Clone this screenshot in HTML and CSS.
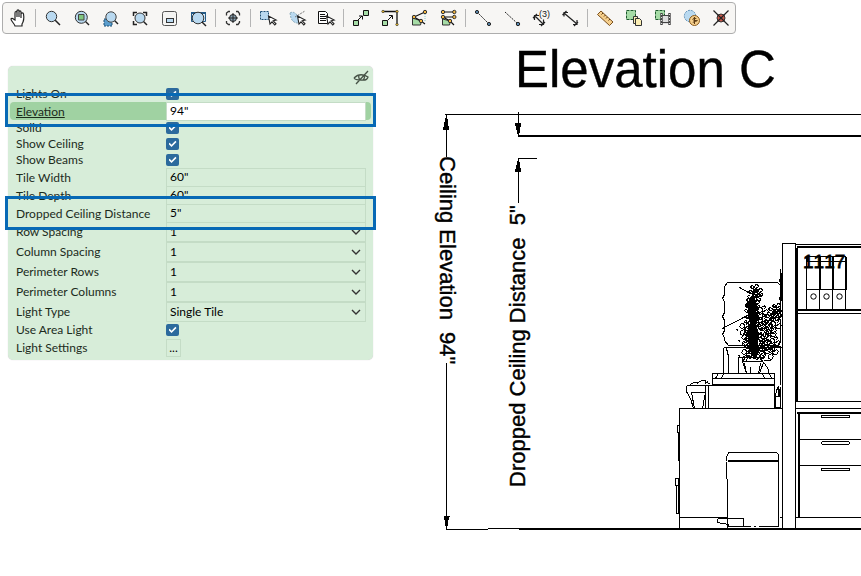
FILE: index.html
```html
<!DOCTYPE html>
<html lang="en">
<head>
<meta charset="utf-8">
<title>Elevation C</title>
<link rel="stylesheet" href="styles.css">
</head>
<body>
<svg class="defs" aria-hidden="true">
  <defs>
    <path id="cursor" d="M11.5 8l1.500 8 2-2.200 2.800 3.200 1.200-1.200-2.800-3 3-.8z" fill="#fff" stroke="#222" stroke-width="1.100"/>
    <path id="chevron" d="M1 2l4 4 4-4" fill="none" stroke="#333" stroke-width="1.400"/>
    <g id="leaf" fill="none" stroke="#000">
      <path d="M0 0h-2l-1-2 2-1 2 2 1-3h2l1 2-3 2 3 1v2l-2 1-2-3-1 3-2 1-2-2 3-2"/>
    </g>
    <g id="bush">
      <use href="#leaf" x="-3" y="-2"/><use href="#leaf" x="2" y="1"/><use href="#leaf" x="-1" y="4"/>
    </g>
    <path id="spray" d="M-4-1l2-3 3 1v3l-3 1zM1 1l4-3 2 2-2 3h-3zM-3 4l3-2 2 3-2 3-3-1zM0-4l3-2 1 2-2 2M-5 3l-2-1" fill="none" stroke="#000"/>
  </defs>
</svg>
<header class="toolbar" role="toolbar" aria-label="View tools">
  <button class="tool" aria-label="Pan"><svg viewBox="0 0 21 20"><path d="M8 18C7 15 4 13 4 11c0-1 2-1 3 .5L8 12V5c0-2 2-2 2 0v4-6c0-1.500 2-1.500 2 0v6-5c0-1.500 2-1.500 2 0v6-4c0-1.500 2.500-1.500 2.500 0 .7 4 .5 7-1.500 10v2z" fill="#fff" stroke="#222" stroke-width="1.200"/></svg></button>
  <span class="sep"></span>
  <button class="tool" aria-label="Zoom"><svg viewBox="0 0 21 20"><path d="M13 12l5 5" stroke="#222" stroke-width="1.500"/><circle cx="9.500" cy="8.500" r="5.200" fill="#b9d9f0" stroke="#333"/></svg></button>
  <button class="tool" aria-label="Zoom object"><svg viewBox="0 0 21 20"><path d="M14 13l4 4" stroke="#222" stroke-width="1.500"/><circle cx="10.300" cy="9.300" r="6" fill="#b9d9f0" stroke="#333"/><path d="M7.500 6.500h5.500v5.500H7.500z" fill="#7fc77f" stroke="#444"/></svg></button>
  <button class="tool" aria-label="Zoom selection"><svg viewBox="0 0 21 20"><path d="M4 11h8v7H4z" fill="#5b9dcc" stroke="#1d4e75" stroke-dasharray="2 1"/><path d="M14 12l4 4" stroke="#222" stroke-width="1.500"/><circle cx="11" cy="9" r="5.200" fill="#b9d9f0" stroke="#444"/></svg></button>
  <button class="tool" aria-label="Zoom extents"><svg viewBox="0 0 21 20"><path d="M4.500 8V4.500H8M14 4.500h3.500V8M4.500 13v3.500H8M14 13l4 4" fill="none" stroke="#222" stroke-width="1.500"/><circle cx="11" cy="10" r="5" fill="#b9d9f0" stroke="#333"/></svg></button>
  <button class="tool" aria-label="Overview"><svg viewBox="0 0 21 20"><rect x="4.500" y="3.500" width="14" height="14" rx="2" fill="#f4f4f2" stroke="#555"/><rect x="8.500" y="10.500" width="7" height="4" fill="#b9d9f0" stroke="#333"/></svg></button>
  <button class="tool" aria-label="Zoom window"><svg viewBox="0 0 21 20"><path d="M4.500 4.500h14v9h-14z" fill="#d9ecf8" stroke="#245a86"/><path d="M4 4h15v2H4z" fill="#245a86"/><path d="M15 14l4 4" stroke="#222" stroke-width="1.500"/><circle cx="11" cy="10" r="5.800" fill="#b9d9f0" stroke="#333"/></svg></button>
  <span class="sep"></span>
  <button class="tool" aria-label="Center view"><svg viewBox="0 0 21 20"><path d="M4.500 7.500V5l2-1.500H8M14 3.500h2l1.500 2v2M4.500 13v2l2 1.500H8M14 16.500h2l1.500-2V13" fill="none" stroke="#333" stroke-width="1.300"/><circle cx="11" cy="10" r="3.500" fill="#8aa3b5" stroke="#222"/><path d="M11 5v10M6 10h10" stroke="#222"/></svg></button>
  <span class="sep"></span>
  <button class="tool" aria-label="Select"><svg viewBox="0 0 21 20"><path d="M3.500 3.500h8v8h-8z" fill="#b9d9f0" stroke="#1d4e75" stroke-dasharray="2 1"/><use href="#cursor"/></svg></button>
  <button class="tool" aria-label="Lasso select"><svg viewBox="0 0 21 20"><path d="M4 5q3-2 6 1l4 3-2 6q-5 0-7-5z" fill="#b9d9f0" stroke="#8ab" stroke-dasharray="2 1"/><path d="M9 9l10-6" stroke="#777" stroke-dasharray="2 1"/><use href="#cursor"/></svg></button>
  <button class="tool" aria-label="Select from list"><svg viewBox="0 0 21 20"><path d="M3.500 3.500h7l2 2v10h-9z" fill="#fff" stroke="#111"/><path d="M5 6.500h5M5 8.500h6M5 10.500h6M5 12.500h6" stroke="#111"/><use href="#cursor"/></svg></button>
  <span class="sep"></span>
  <button class="tool" aria-label="Move"><svg viewBox="0 0 21 20"><path d="M3.500 12.500h5v5h-5zM13.500 2.500h5v5h-5z" fill="#a6dca6" stroke="#111"/><path d="M8 12l4-4M9 8h3.500v3.500" fill="none" stroke="#111"/></svg></button>
  <button class="tool" aria-label="Move to corner"><svg viewBox="0 0 21 20"><path d="M4 3.500h14v13" fill="none" stroke="#111" stroke-width="1.300"/><path d="M3.500 12.500h5v5h-5z" fill="#a6dca6" stroke="#111"/><path d="M9 12l4-4M10 7.500h3.500V11" fill="none" stroke="#111"/><g fill="#f4c430" stroke="#333" stroke-width=".7"><circle cx="4" cy="3.500" r="1.200"/><circle cx="18" cy="3.500" r="1.200"/><circle cx="18" cy="16.500" r="1.200"/></g></svg></button>
  <button class="tool" aria-label="Edit shape"><svg viewBox="0 0 21 20"><path d="M4.500 10v7h8l1-4z" fill="#a6dca6" stroke="#333"/><path d="M17 4v9" stroke="#8cc" stroke-dasharray="1 1"/><path d="M17 4L6 9l7 4 4 3" fill="none" stroke="#111" stroke-width="1.200"/><g fill="#f4b740" stroke="#333"><circle cx="17" cy="4" r="1.700"/><circle cx="6" cy="9" r="1.700"/><circle cx="13" cy="13" r="1.700"/></g></svg></button>
  <button class="tool" aria-label="Edit points"><svg viewBox="0 0 21 20"><path d="M5.500 11v6h7l1-4z" fill="#a6dca6" stroke="#333"/><path d="M6 4h11M17 9H6l7 4 4 4" fill="none" stroke="#111" stroke-width="1.200"/><g fill="#f4b740" stroke="#333"><circle cx="6" cy="4" r="1.700"/><circle cx="17.300" cy="4" r="1.700"/><circle cx="6" cy="9" r="1.700"/><circle cx="17.300" cy="9" r="1.700"/><circle cx="13" cy="13" r="1.700"/></g></svg></button>
  <span class="sep"></span>
  <button class="tool" aria-label="Line"><svg viewBox="0 0 21 20"><path d="M5 4l12 12" stroke="#222" stroke-dasharray="2 1"/><g fill="#5b8db5" stroke="#222"><circle cx="5" cy="4" r="1.600"/><circle cx="17" cy="16" r="1.600"/></g></svg></button>
  <button class="tool" aria-label="Line end"><svg viewBox="0 0 21 20"><path d="M4 4l13 12" stroke="#222" stroke-dasharray="2 1"/><circle cx="17" cy="16" r="1.700" fill="#5b8db5" stroke="#222"/></svg></button>
  <button class="tool" aria-label="Dimension chain"><svg viewBox="0 0 21 20"><path d="M5 8l8 8M4.500 12V7.500H9M13.500 11.500v5H9M3 10l4-4M11 18l4-4" fill="none" stroke="#222" stroke-width="1.200"/><text x="9" y="9" class="tool-count">(3)</text></svg></button>
  <button class="tool" aria-label="Dimension"><svg viewBox="0 0 21 20"><path d="M5 5l13 11M5 8.500V4.500h4M18 12v4.500h-4M3.500 7l4-4M15 18l4-4" fill="none" stroke="#222" stroke-width="1.200"/></svg></button>
  <span class="sep"></span>
  <button class="tool" aria-label="Measure"><svg viewBox="0 0 21 20"><path d="M7 3l12 11-3.500 3.500L3.500 6.500z" fill="#f6cf8c" stroke="#7a4f1c"/><path d="M9 5L7.500 6.500M11.500 7L10 8.500M13.500 9L12 10.500M16 11l-1.500 1.500" stroke="#5b3a12"/></svg></button>
  <button class="tool" aria-label="Copy"><svg viewBox="0 0 21 20"><path d="M3.500 2.500h9v9h-9z" fill="#a6dca6" stroke="#1c5a2c" stroke-dasharray="3 1"/><path d="M10.500 8.500h4v7h-4z" fill="#fbeeb5" stroke="#333"/><path d="M12.500 10.500h4l2 2v5h-6z" fill="#fbeeb5" stroke="#333"/></svg></button>
  <button class="tool" aria-label="Array"><svg viewBox="0 0 21 20"><path d="M3.500 2.500h9v9h-9z" fill="#a6dca6" stroke="#1c5a2c" stroke-dasharray="3 1"/><path d="M9 7h9v9H9z" fill="#ddd"/><path d="M9.500 5v12M17.500 5v12" stroke="#444" stroke-width="2.400"/><path d="M9 7.500h9M9 14.500h9" stroke="#444"/><path d="M9.500 6v11M17.500 6v11" stroke="#ddd" stroke-dasharray="1 2"/></svg></button>
  <button class="tool" aria-label="Cost"><svg viewBox="0 0 21 20"><circle cx="9" cy="8" r="5.700" fill="#b9d9f0" stroke="#5b8db5" stroke-dasharray="2 1"/><circle cx="13.500" cy="12.500" r="5" fill="#f6cf8c" stroke="#8a5a1c"/><path d="M15.300 10.500q-3.500-1-3.500.7t3.500 1.300-3.500 1.800M13.500 9v7" fill="none" stroke="#5b3a12"/></svg></button>
  <button class="tool" aria-label="Delete point"><svg viewBox="0 0 21 20"><circle cx="11" cy="10" r="4" fill="#c9584a" stroke="#333"/><path d="M3.500 2.500l15 15M18.500 2.500l-15 15" stroke="#222" stroke-width="1.200"/></svg></button>
</header>

<main class="workspace">
  <form class="panel">
    <div class="panel-head">
      <button class="hide" type="button" aria-label="Hide"><svg viewBox="0 0 18 16"><path d="M2 9q6-6 14-1-1 4-7 3Q3 11 2 9M7 6q-1 4 2 5M11 6q3 2 0 5M16 2L4 15" fill="none" stroke="#465246" stroke-width="1.300"/></svg></button>
    </div>
    <div class="row"><label for="lights">Lights On</label><input id="lights" type="checkbox" checked></div>
    <div class="row field selected"><label for="elev">Elevation</label><input id="elev" type="text" value="94&quot;"></div>
    <div class="row"><label for="solid">Solid</label><input id="solid" type="checkbox" checked></div>
    <div class="row"><label for="ceil">Show Ceiling</label><input id="ceil" type="checkbox" checked></div>
    <div class="row"><label for="beams">Show Beams</label><input id="beams" type="checkbox" checked></div>
    <div class="row field"><label for="tw">Tile Width</label><input id="tw" type="text" value="60&quot;"></div>
    <div class="row field"><label for="td">Tile Depth</label><input id="td" type="text" value="60&quot;"></div>
    <div class="row field"><label for="drop">Dropped Ceiling Distance</label><input id="drop" type="text" value="5&quot;"></div>
    <div class="row choice"><label for="rs">Row Spacing</label><span class="pick"><select id="rs"><option>1</option></select><svg viewBox="0 0 10 8"><use href="#chevron"/></svg></span></div>
    <div class="row choice"><label for="cs">Column Spacing</label><span class="pick"><select id="cs"><option>1</option></select><svg viewBox="0 0 10 8"><use href="#chevron"/></svg></span></div>
    <div class="row choice"><label for="pr">Perimeter Rows</label><span class="pick"><select id="pr"><option>1</option></select><svg viewBox="0 0 10 8"><use href="#chevron"/></svg></span></div>
    <div class="row choice"><label for="pc">Perimeter Columns</label><span class="pick"><select id="pc"><option>1</option></select><svg viewBox="0 0 10 8"><use href="#chevron"/></svg></span></div>
    <div class="row choice"><label for="lt">Light Type</label><span class="pick"><select id="lt"><option>Single Tile</option></select><svg viewBox="0 0 10 8"><use href="#chevron"/></svg></span></div>
    <div class="row"><label for="area">Use Area Light</label><input id="area" type="checkbox" checked></div>
    <div class="row choice"><label for="ls">Light Settings</label><button id="ls" class="more" type="button">...</button></div>
    <span class="callout callout-elevation"></span>
    <span class="callout callout-drop"></span>
  </form>

  <svg class="drawing" viewBox="380 36 481 540" role="img" aria-label="Elevation C">
    <g class="lettering">
      <text x="515" y="87" class="title">Elevation C</text>
      <text transform="translate(440 156) rotate(90)" class="dim">Ceiling Elevation&#160; 94"</text>
      <text transform="translate(525 487) rotate(-90)" class="dim">Dropped Ceiling Distance&#160; 5"</text>
      <text x="803" y="268" class="tag">1117</text>
    </g>
    <g class="lines" transform="translate(.5 .5)">
      <!-- dimension lines -->
      <path d="M444 114H861M446 114V156M446 362V529M518 111V136M517 158H536M518 158V202M445 529H487M487 528H861"/>
      <path d="M446 115l-3 14h5zM518 136l-3-13h5zM518 158l-3 13h5zM446 529l-2-13h4z" class="solid"/>
      <path d="M443 516h6"/>
      <path d="M517 135H861M517 136H861M518 529H861"/>
      <!-- shelving -->
      <path d="M782 528V243H795V528M795 244H861M796 246H861M796 247H861M796 247V401M797 247V401M796 309H861M796 310H861M796 313H861M796 401H861M795 408H861M796 412H861M796 413H861M798 412V517M799 412V517M799 439H861M799 465H861M795 517H861"/>
      <path d="M821 415h28v2h-28zM822 441h26l1 1v1l-1 1h-26l-1-1v-1zM821 468h28v2h-28z"/>
      <path d="M806 309V256H845V309M806 261H845M819 256V309M820 256V289M832 256V309M833 256V289M846 256V289M806 289H845M807 256V261"/>
      <g class="smooth"><circle cx="813" cy="296" r="2.700"/><circle cx="826" cy="296" r="2.700"/><circle cx="839" cy="296" r="2.700"/></g>
      <!-- desk and bin -->
      <path d="M679 528V408H782M679 517H727M779 517H782M726 478V461M727 478V527M778 453V526M727 460H778M727 461H778M726 460V457L728 452H776L778 454M717 518H743V526M717 518V522L728 524V526H750M753 526h2M758 526H778"/>
      <path d="M678 425H677V432H678V460M679 432V460M678 478H675V485H678M676 485V513H678V478"/>
      <!-- boxes and cup -->
      <path d="M712 373H774V384H712zM712 378H774M712 385H774M686 385H712M705 385V408M708 385V408M774 384V408M715 378l3-5M721 378l2-5M762 373l2 5M769 373l2 5"/>
      <path d="M686 385v6l4 7 3 10M691 392h14l-3 16M691 392l3 16M690 384l3-2h5l3-2h4v2l5 1M696 384l3-3M704 384l3-3"/>
      <path d="M775 407V396H780V407zM775 396l1-6 2-4V396M780 386V408M779 388v8"/>
      <!-- picture panel behind the plant -->
      <path d="M727 282H777l3 3v10l-1 3 1 3v13l-1 3 1 4v20l-3 4H728l-4-5v-3l-2-3 2-4v-10l-2-4 2-4V301l-2-3 2-4v-8zM739 287l9 5M722 328l23-12M723 347H782M723 373V347M726 348l2 8v17M780 347V384M738 373V357H763M764 363l4 6v4M780 268V300M781 272V300M779 278v3h3M779 284h3M779 290h3M779 296h3M774 345l8 2"/>
      <path d="M742 361l3-4h14l4 5-4 11h-13zM742 361h20M750 366v7M746 373l-2-10M758 373l2-10M763 360h6l3-1"/>
      <!-- foliage -->
      <path d="M753 285V358M755 358l8-18 12-30M754 350l-10-22M752 300l2 58"/>
      <path d="M751 298l3 1 2 5-1 5 2 8-2 8 3 8-1 9 1 10-4 6-5-9 1-9-3-9 3-8-2-8 1-6-3-5z" class="solid"/>
      <use href="#leaf" x="753" y="288"/><use href="#leaf" x="757" y="292"/><use href="#leaf" x="751" y="293"/><use href="#leaf" x="755" y="297"/>
      <use href="#bush" x="752" y="303"/><use href="#bush" x="751" y="309"/><use href="#leaf" x="754" y="316"/>
      <use href="#bush" x="751" y="320"/><use href="#leaf" x="757" y="326"/><use href="#bush" x="750" y="332"/>
      <use href="#leaf" x="757" y="337"/><use href="#bush" x="750" y="342"/><use href="#leaf" x="757" y="347"/><use href="#leaf" x="751" y="353"/>
      <use href="#spray" x="743" y="327"/><use href="#spray" x="745" y="338"/><use href="#spray" x="745" y="353"/><use href="#leaf" x="758" y="354"/>
      <use href="#leaf" x="775" y="307"/><use href="#bush" x="774" y="312"/><use href="#leaf" x="768" y="317"/><use href="#spray" x="761" y="311"/><use href="#spray" x="761" y="321"/>
      <use href="#leaf" x="767" y="323"/><use href="#spray" x="774" y="325"/><use href="#leaf" x="763" y="330"/><use href="#spray" x="769" y="333"/><use href="#leaf" x="763" y="338"/>
      <use href="#spray" x="773" y="342"/><use href="#leaf" x="766" y="344"/><use href="#spray" x="763" y="350"/><use href="#spray" x="771" y="351"/>
    </g>
  </svg>
</main>
</body>
</html>
```

FILE: styles.css
```css
* { box-sizing: border-box; }

body {
  margin: 0;
  background: #fff;
  color: #1c2b1c;
  font: 12px/16px Lato, "Open Sans", sans-serif;
}

button, input, select {
  margin: 0;
  padding: 0;
  border: 0;
  background: none;
  color: #000;
  font: inherit;
}

.defs { display: block; width: 0; height: 0; }

.toolbar {
  display: flex;
  width: fit-content;
  margin: 2px;
  border: 1px solid #adadad;
  border-radius: 4px;
  background: #f7f6f4;
}

.tool {
  display: grid;
  place-items: center;
  width: 29px;
  height: 30px;
}

.tool svg { width: 21px; height: 20px; fill: none; }
.tool-count { font: 9px "Liberation Sans", sans-serif; fill: #222; }

.sep {
  width: 2px;
  margin: 6px 1px 6px 3px;
  border-left: 1px solid #b5b5b5;
}

.workspace {
  display: grid;
  grid-template-columns: 380px 1fr;
  align-items: start;
}

.panel {
  position: relative;
  margin: 30px 7px 0 8px;
  padding: 0 2px 2px;
  border-radius: 5px;
  background: #d7edd9;
  box-shadow: 0 0 1px #cdbfcd;
}

.panel-head {
  display: flex;
  justify-content: flex-end;
  height: 20px;
  padding: 3px 1px 0;
}

.hide { width: 18px; height: 16px; }
.hide svg { display: block; }

.row {
  display: grid;
  grid-template-columns: 150px 1fr;
  align-items: center;
  height: 16px;
  padding: 0 5px 0 6px;
}

.row.field { height: 18px; }
.row.choice { height: 20px; }
.row label { white-space: nowrap; }

.row.selected { border-radius: 4px; background: #a0d2a2; }
.selected label { text-decoration: underline; }

input[type="text"], .pick {
  width: 100%;
  height: 100%;
  border: 1px solid #c4dcc6;
}

input[type="text"] { padding: 0 3px 2px; }
.selected input[type="text"] { background: #fff; }

.pick {
  display: grid;
  grid-template-columns: 1fr 10px;
  align-items: center;
  padding: 0 4px 0 3px;
}

.pick select { grid-area: 1 / 1 / 2 / 3; appearance: none; width: 100%; }
.pick svg { grid-area: 1 / 2; width: 10px; height: 8px; pointer-events: none; }

input[type="checkbox"] {
  appearance: none;
  display: grid;
  place-items: center;
  width: 13px;
  height: 12px;
  border-radius: 2px;
  background: #2c6a9d;
}

input[type="checkbox"]:checked::before {
  content: "";
  width: 8px;
  height: 8px;
  background: #fff;
  clip-path: polygon(0 50%, 14% 34%, 38% 58%, 86% 8%, 100% 24%, 38% 88%);
}

.more {
  width: 15px;
  height: 18px;
  border: 1px solid #c4dcc6;
  line-height: 14px;
}

.callout {
  position: absolute;
  left: -3px;
  right: -3px;
  height: 34px;
  border: 3px solid #0769b5;
  pointer-events: none;
}

.callout-elevation { top: 27px; }
.callout-drop { top: 130px; }

.drawing { display: block; width: 100%; height: auto; }
.lettering {
  font-family: "Liberation Sans", Arial, sans-serif;
  font-kerning: none;
  fill: #000;
  stroke: #000;
  stroke-width: .4;
}
.title { font-size: 51px; }
.dim { font-size: 22px; }
.tag { font-size: 19px; stroke-width: .8; }
.lines { fill: none; stroke: #000; stroke-width: 1; shape-rendering: crispEdges; }
.solid { fill: #000; }
.smooth { shape-rendering: auto; }
```
